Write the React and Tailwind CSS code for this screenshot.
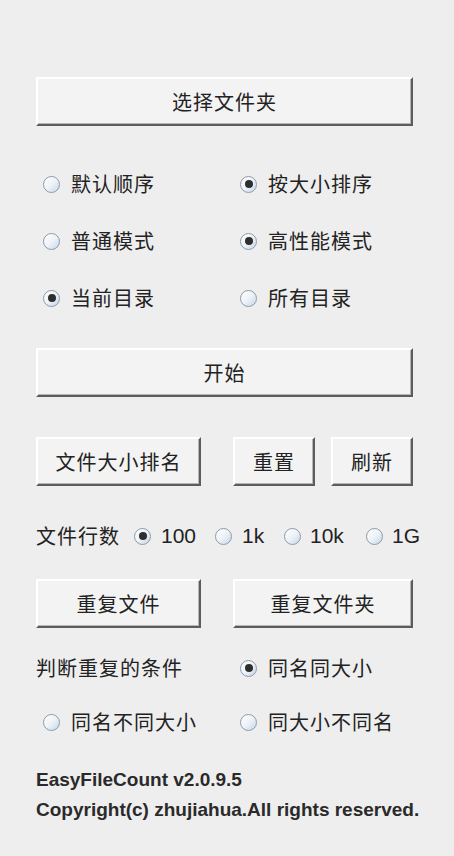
import React from 'react';

const cjk = { fontFamily: '"Noto Sans CJK SC", "Liberation Sans", sans-serif' };
const latin = { fontFamily: '"Liberation Sans", sans-serif' };

const Button = ({ label, className = '' }) => (
  <button
    className={`h-[49px] bg-[#f3f3f3] border-t-2 border-l-2 border-t-white border-l-white border-b-2 border-r-2 border-b-[#5c5c5c] border-r-[#5c5c5c] shadow-[inset_-1px_-1px_0_#b5b5b5] text-[20px] tracking-[1px] text-[#222] flex items-center justify-center ${className}`}
    style={cjk}
  >
    {label}
  </button>
);

const Radio = ({ checked }) => (
  <span className="w-[17px] h-[17px] shrink-0 rounded-full border border-[#8d9aa8] bg-gradient-to-br from-white via-[#eef3f8] to-[#c6d6e7] flex items-center justify-center">
    {checked && <span className="w-[8px] h-[8px] rounded-full bg-[#2e2e2e]" />}
  </span>
);

const Option = ({ label, checked, className = '' }) => (
  <div className={`flex items-center ${className}`}>
    <Radio checked={checked} />
    <span className="ml-[11px] text-[20px] tracking-[1px] text-[#222] leading-none" style={cjk}>{label}</span>
  </div>
);

const RadioRow = ({ left, right, className = '' }) => (
  <div className={`h-[28px] flex items-center ${className}`}>
    <Option label={left.label} checked={left.checked} className="ml-[7px] w-[197px]" />
    <Option label={right.label} checked={right.checked} />
  </div>
);

export default function App() {
  return (
    <div className="w-[454px] h-[856px] bg-[#eeeeee] pl-[36px] pr-[41px] pt-[77px] flex flex-col">
      <Button label="选择文件夹" className="w-full" />

      <RadioRow
        className="mt-[44px]"
        left={{ label: '默认顺序' }}
        right={{ label: '按大小排序', checked: true }}
      />
      <RadioRow
        className="mt-[29px]"
        left={{ label: '普通模式' }}
        right={{ label: '高性能模式', checked: true }}
      />
      <RadioRow
        className="mt-[29px]"
        left={{ label: '当前目录', checked: true }}
        right={{ label: '所有目录' }}
      />

      <Button label="开始" className="w-full mt-[36px]" />

      <div className="flex mt-[40px]">
        <Button label="文件大小排名" className="w-[165px]" />
        <Button label="重置" className="w-[82px] ml-[32px]" />
        <Button label="刷新" className="w-[82px] ml-[16px]" />
      </div>

      <div className="h-[28px] flex items-center mt-[36px] text-[20px] text-[#222] whitespace-nowrap" style={cjk}>
        <span className="w-[98px] shrink-0 tracking-[1px]">文件行数</span>
        <Radio checked />
        <span className="ml-[10px] w-[54px] shrink-0 text-[21px]" style={latin}>100</span>
        <Radio />
        <span className="ml-[10px] w-[42px] shrink-0 text-[21px]" style={latin}>1k</span>
        <Radio />
        <span className="ml-[9px] w-[56px] shrink-0 text-[21px]" style={latin}>10k</span>
        <Radio />
        <span className="ml-[9px] shrink-0 text-[21px]" style={latin}>1G</span>
      </div>

      <div className="flex mt-[29px]">
        <Button label="重复文件" className="w-[165px]" />
        <Button label="重复文件夹" className="w-[180px] ml-[32px]" />
      </div>

      <div className="h-[28px] flex items-center mt-[26px]">
        <span className="w-[204px] text-[20px] tracking-[1px] text-[#222]" style={cjk}>判断重复的条件</span>
        <Option label="同名同大小" checked />
      </div>
      <RadioRow
        className="mt-[26px]"
        left={{ label: '同名不同大小' }}
        right={{ label: '同大小不同名' }}
      />

      <div
        className="mt-[32px] h-[24px] flex items-center text-[19px] font-bold text-[#2a2a2a] whitespace-nowrap"
        style={latin}
      >
        EasyFileCount v2.0.9.5
      </div>
      <div
        className="mt-[6px] h-[24px] flex items-center text-[19px] font-bold text-[#2a2a2a] whitespace-nowrap"
        style={latin}
      >
        Copyright(c) zhujiahua.All rights reserved.
      </div>
    </div>
  );
}
